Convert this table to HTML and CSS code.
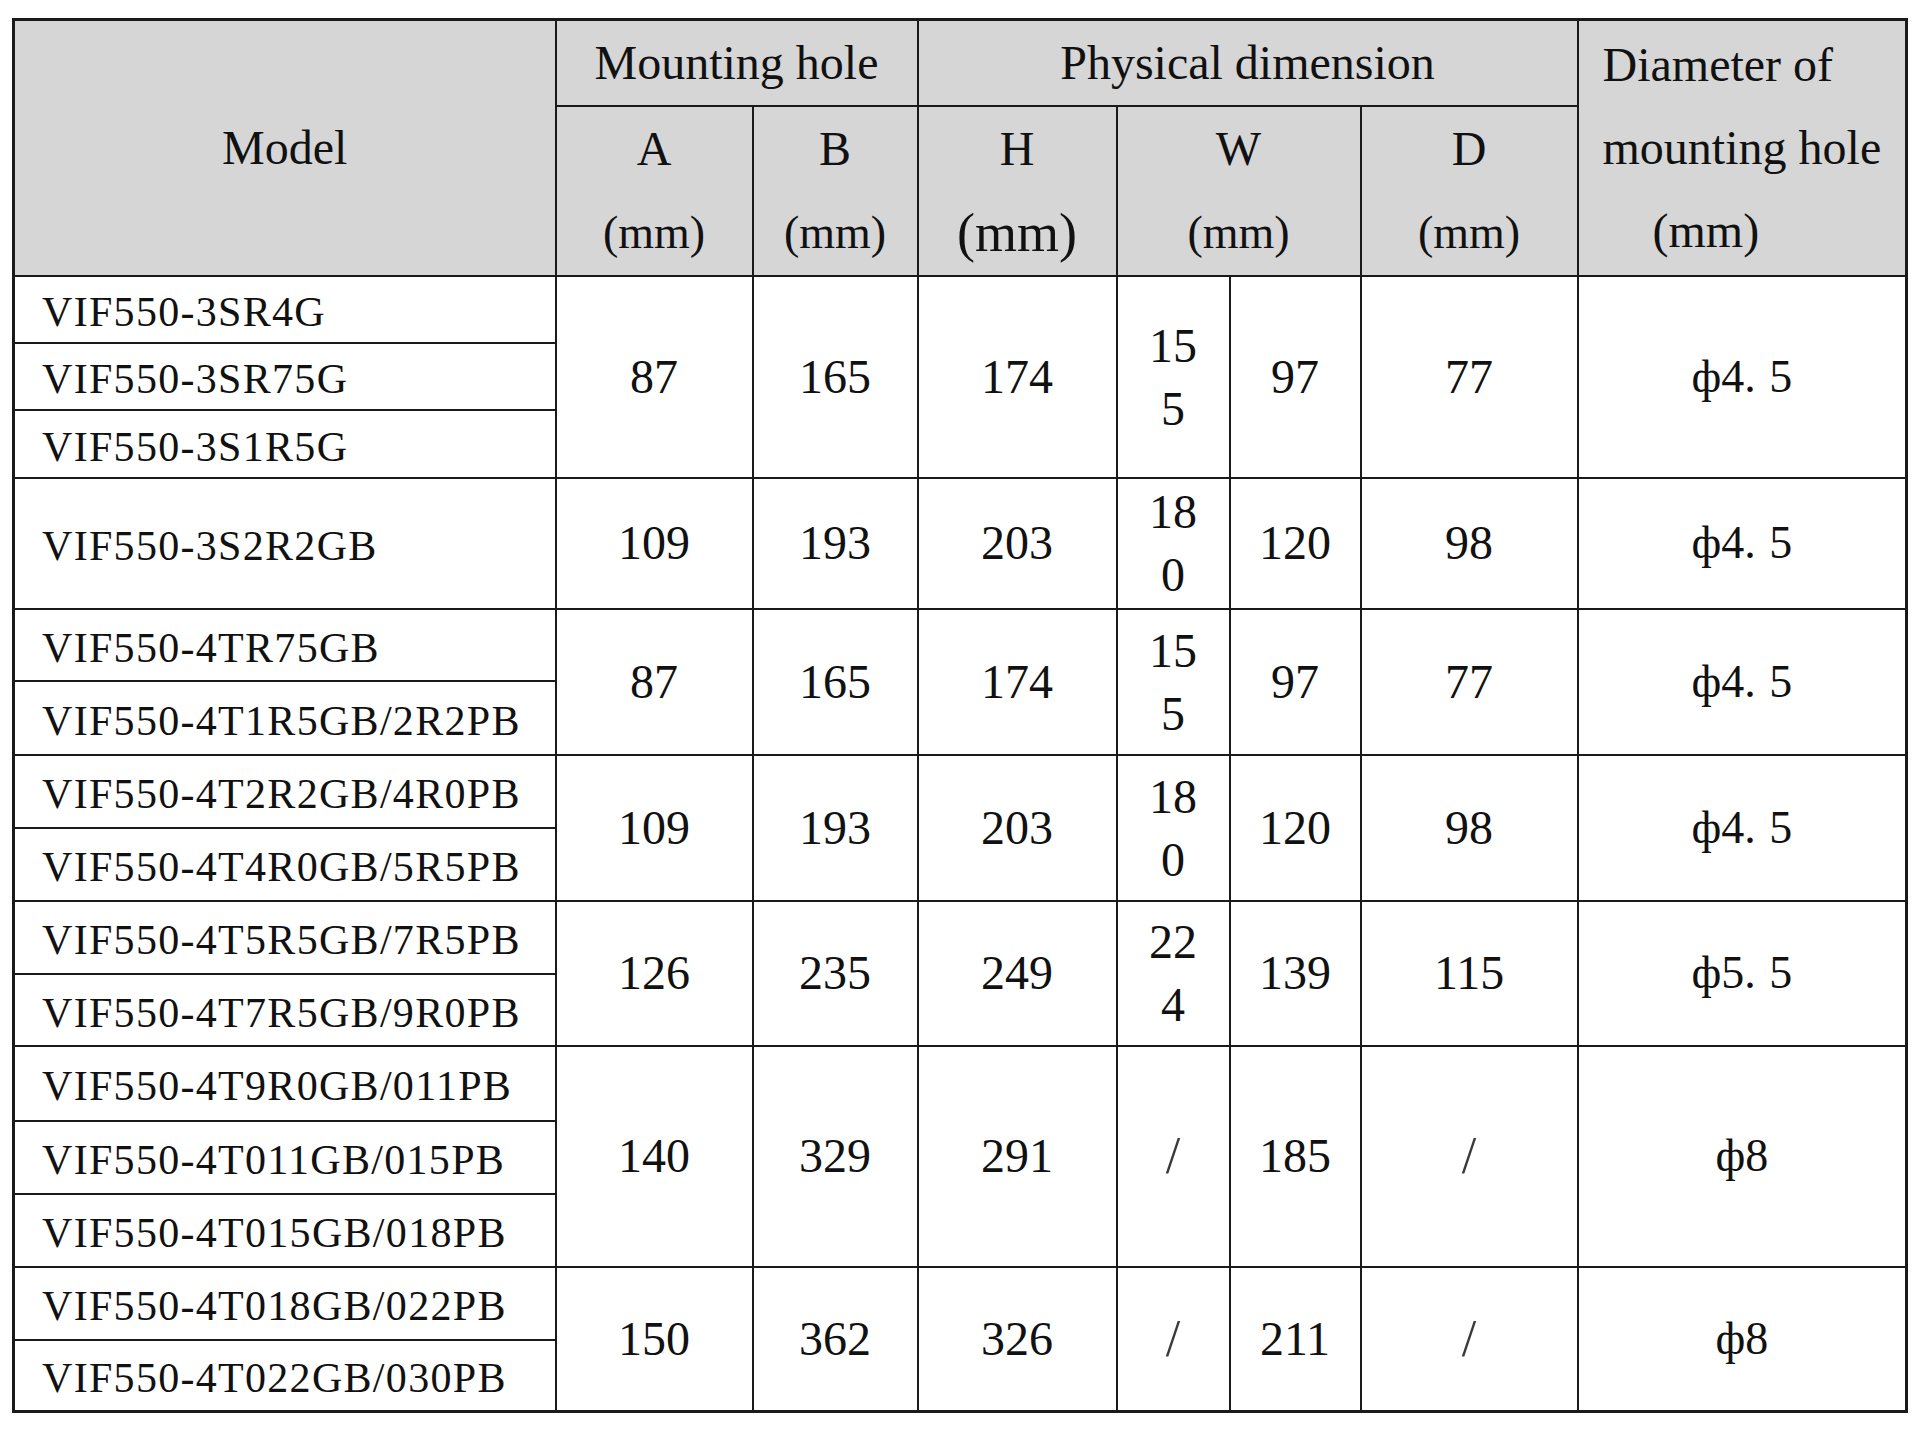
FILE: index.html
```html
<!DOCTYPE html>
<html lang="en">
<head>
<meta charset="utf-8">
<title>Mounting dimensions</title>
<link rel="stylesheet" href="styles.css">
</head>
<body>
<div class="page">
<table class="spec">
  <colgroup>
    <col class="c-model">
    <col class="c-a">
    <col class="c-b">
    <col class="c-h">
    <col class="c-w1">
    <col class="c-w2">
    <col class="c-d">
    <col class="c-diam">
  </colgroup>
  <thead>
    <tr class="hr1">
      <th rowspan="2" class="th-model">Model</th>
      <th colspan="2">Mounting hole</th>
      <th colspan="4">Physical dimension</th>
      <th rowspan="2" class="th-diam"><span class="ln">Diameter of</span><span class="ln">mounting hole</span><span class="ln unit-in">(mm)</span></th>
    </tr>
    <tr class="hr2">
      <th><span class="ln">A</span><span class="ln unit">(mm)</span></th>
      <th><span class="ln">B</span><span class="ln unit">(mm)</span></th>
      <th><span class="ln">H</span><span class="ln unit big">(mm)</span></th>
      <th colspan="2"><span class="ln">W</span><span class="ln unit">(mm)</span></th>
      <th><span class="ln">D</span><span class="ln unit">(mm)</span></th>
    </tr>
  </thead>
  <tbody>
    <tr class="r67"><td class="m">VIF550-3SR4G</td><td rowspan="3">87</td><td rowspan="3">165</td><td rowspan="3">174</td><td rowspan="3" class="st">15<br>5</td><td rowspan="3">97</td><td rowspan="3">77</td><td rowspan="3" class="dia">ф4. 5</td></tr>
    <tr class="r67"><td class="m">VIF550-3SR75G</td></tr>
    <tr class="r68"><td class="m">VIF550-3S1R5G</td></tr>

    <tr class="r131"><td class="m">VIF550-3S2R2GB</td><td>109</td><td>193</td><td>203</td><td class="st">18<br>0</td><td>120</td><td>98</td><td class="dia">ф4. 5</td></tr>

    <tr class="r72"><td class="m">VIF550-4TR75GB</td><td rowspan="2">87</td><td rowspan="2">165</td><td rowspan="2">174</td><td rowspan="2" class="st">15<br>5</td><td rowspan="2">97</td><td rowspan="2">77</td><td rowspan="2" class="dia">ф4. 5</td></tr>
    <tr class="r74"><td class="m">VIF550-4T1R5GB/2R2PB</td></tr>

    <tr class="r73"><td class="m">VIF550-4T2R2GB/4R0PB</td><td rowspan="2">109</td><td rowspan="2">193</td><td rowspan="2">203</td><td rowspan="2" class="st">18<br>0</td><td rowspan="2">120</td><td rowspan="2">98</td><td rowspan="2" class="dia">ф4. 5</td></tr>
    <tr class="r73"><td class="m">VIF550-4T4R0GB/5R5PB</td></tr>

    <tr class="r73"><td class="m">VIF550-4T5R5GB/7R5PB</td><td rowspan="2">126</td><td rowspan="2">235</td><td rowspan="2">249</td><td rowspan="2" class="st">22<br>4</td><td rowspan="2">139</td><td rowspan="2">115</td><td rowspan="2" class="dia">ф5. 5</td></tr>
    <tr class="r72"><td class="m">VIF550-4T7R5GB/9R0PB</td></tr>

    <tr class="r75"><td class="m">VIF550-4T9R0GB/011PB</td><td rowspan="3">140</td><td rowspan="3">329</td><td rowspan="3">291</td><td rowspan="3" class="sl">/</td><td rowspan="3">185</td><td rowspan="3" class="sl">/</td><td rowspan="3" class="dia">ф8</td></tr>
    <tr class="r73"><td class="m">VIF550-4T011GB/015PB</td></tr>
    <tr class="r73"><td class="m">VIF550-4T015GB/018PB</td></tr>

    <tr class="r73"><td class="m">VIF550-4T018GB/022PB</td><td rowspan="2">150</td><td rowspan="2">362</td><td rowspan="2">326</td><td rowspan="2" class="sl">/</td><td rowspan="2">211</td><td rowspan="2" class="sl">/</td><td rowspan="2" class="dia">ф8</td></tr>
    <tr class="r72"><td class="m">VIF550-4T022GB/030PB</td></tr>
  </tbody>
</table>
</div>
</body>
</html>
```

FILE: styles.css
```css
html, body {
  margin: 0;
  padding: 0;
  background: #ffffff;
}

.page {
  padding: 18px 0 0 12px;
}

.spec {
  border-collapse: collapse;
  table-layout: fixed;
  width: 1893px;
  border: 3px solid #1a1a1a;
  font-family: "Liberation Serif", "Times New Roman", serif;
  color: #111111;
}

.c-model { width: 542px; }
.c-a { width: 197px; }
.c-b { width: 165px; }
.c-h { width: 199px; }
.c-w1 { width: 113px; }
.c-w2 { width: 131px; }
.c-d { width: 217px; }
.c-diam { width: 329px; }

.spec th,
.spec td {
  border: 2px solid #1a1a1a;
  padding: 0;
  text-align: center;
  vertical-align: middle;
  overflow: hidden;
  white-space: nowrap;
}

.spec th {
  background: #d6d6d6;
  font-weight: normal;
  font-size: 48px;
  line-height: 80px;
}

.hr2 th {
  line-height: 84px;
}

.hr1 { height: 86px; }
.hr2 { height: 170px; }

.ln {
  display: block;
}

.unit {
  font-size: 46px;
}

.unit.big {
  font-size: 54px;
}

.spec th.th-diam {
  text-align: left;
  padding-left: 24px;
  line-height: 83px;
}

.unit-in {
  padding-left: 50px;
}

.spec td {
  font-size: 48px;
  line-height: 56px;
}

.spec td.m {
  text-align: left;
  padding-left: 27px;
  padding-top: 6px;
  font-size: 42px;
  line-height: 54px;
  letter-spacing: 1.3px;
}

.spec td.st {
  line-height: 63px;
}

.spec td.sl {
  font-size: 52px;
  color: #3a3a3a;
}

.spec td.dia {
  font-size: 46px;
  word-spacing: 2px;
}

.r67 { height: 67px; }
.r68 { height: 68px; }
.r72 { height: 72px; }
.r73 { height: 73px; }
.r74 { height: 74px; }
.r75 { height: 75px; }
.r131 { height: 131px; }
```
